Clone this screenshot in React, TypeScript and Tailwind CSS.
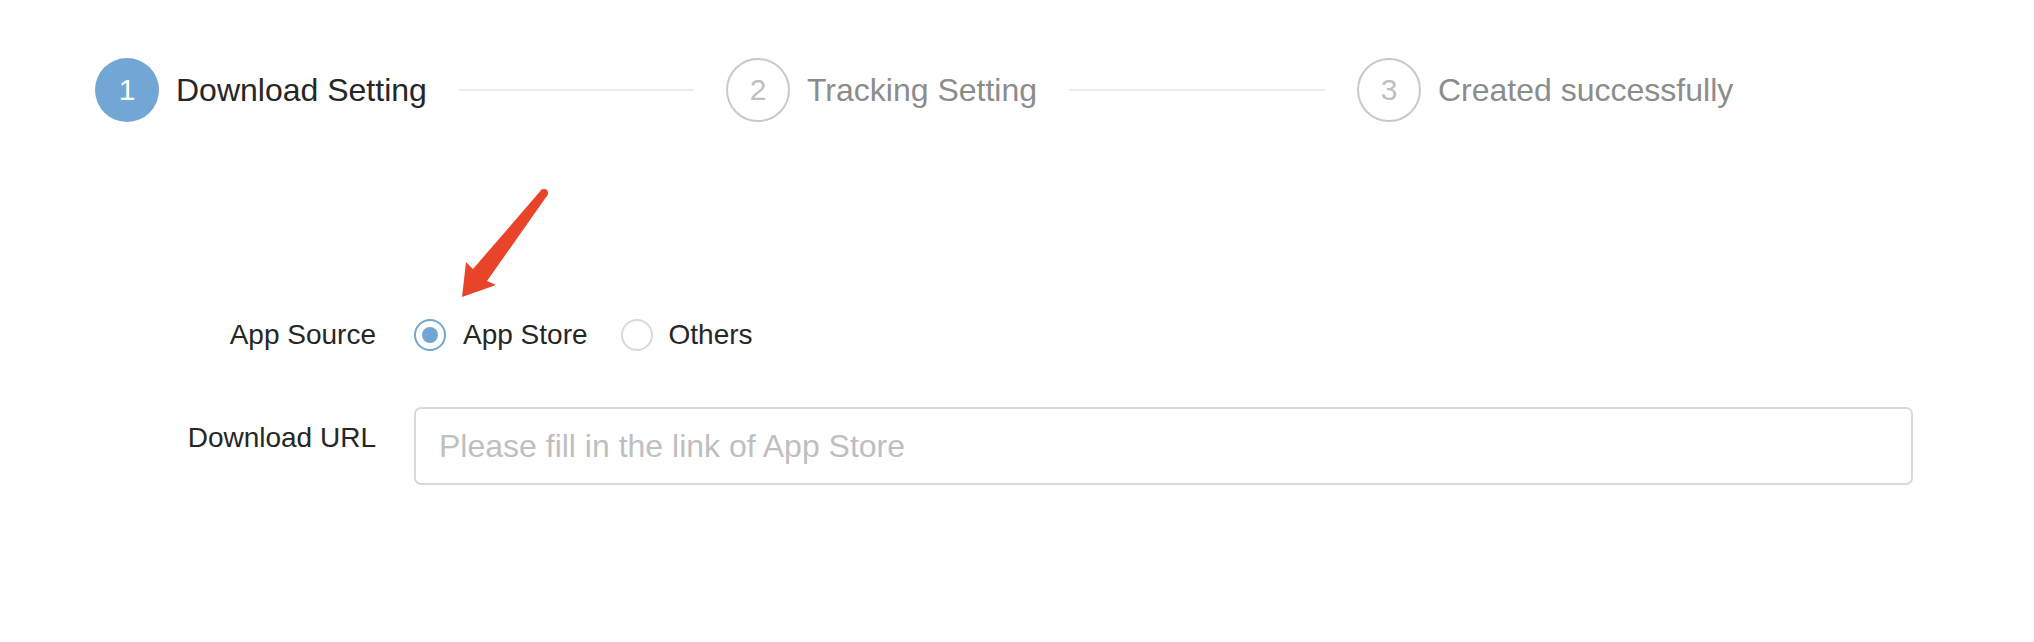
import React from 'react';

const steps = [
  { num: 1, title: "Download Setting", active: true },
  { num: 2, title: "Tracking Setting", active: false },
  { num: 3, title: "Created successfully", active: false },
];

const StepCircle: React.FC<{ num: number; active: boolean }> = ({ num, active }) =>
  active ? (
    <div className="w-[64px] h-[64px] shrink-0 rounded-full bg-[#72a6d4] flex items-center justify-center text-white text-[30px] leading-none">
      {num}
    </div>
  ) : (
    <div className="w-[64px] h-[64px] shrink-0 rounded-full border-[2px] border-[#c9c9c9] flex items-center justify-center text-[#bfbfbf] text-[30px] leading-none">
      {num}
    </div>
  );

export default function App() {
  return (
    <div
      className="relative w-[2034px] h-[642px] bg-white overflow-hidden"
      style={{ fontFamily: '"Liberation Sans", Arial, sans-serif' }}
    >
      {/* Steps */}
      <div className="ml-[95px] pt-[58px] w-[1644px] flex items-center">
        {steps.map((s, i) => {
          const last = i === steps.length - 1;
          return (
            <div key={s.num} className={last ? "w-[382px] flex-none flex items-center" : "flex-1 flex items-center"}>
              <StepCircle num={s.num} active={s.active} />
              <span
                className={`ml-[17px] text-[32px] leading-[64px] whitespace-nowrap ${
                  s.active ? "text-[#262626]" : "text-[#8c8c8c]"
                }`}
              >
                {s.title}
              </span>
              {!last && <div className="flex-1 h-[2px] bg-[#ebebeb] mx-[32px]" />}
            </div>
          );
        })}
      </div>

      {/* Form */}
      <div className="mt-[185px] flex flex-col gap-[44px]">
        <div className="flex items-center h-[56px]">
          <div className="w-[376px] text-right text-[28px] text-[#262626]">App Source</div>
          <div className="ml-[38px] flex items-center text-[28px] text-[#262626]">
            <label className="flex items-center">
              <span className="w-[32px] h-[32px] rounded-full border-[2px] border-[#72a6d4] flex items-center justify-center">
                <span className="w-[16px] h-[16px] rounded-full bg-[#72a6d4]" />
              </span>
              <span className="ml-[17px]">App Store</span>
            </label>
            <label className="flex items-center ml-[33px]">
              <span className="w-[32px] h-[32px] rounded-full border-[2px] border-[#d9d9d9]" />
              <span className="ml-[16px]">Others</span>
            </label>
          </div>
        </div>

        <div className="flex items-start">
          <div className="w-[376px] text-right text-[28px] leading-[62px] text-[#262626]">Download URL</div>
          <input
            type="text"
            placeholder="Please fill in the link of App Store"
            className="ml-[38px] w-[1499px] h-[78px] rounded-[7px] border-[2px] border-[#d9d9d9] px-[23px] text-[32px] text-[#262626] placeholder:text-[#bfbfbf] outline-none"
          />
        </div>
      </div>

      {/* Annotation arrow */}
      <svg
        className="absolute left-0 top-0 pointer-events-none"
        width="2034"
        height="642"
        viewBox="0 0 2034 642"
      >
        <polygon
          points="540.8,190.5 473,269 466,262 462,297 496,285 487,281 547.2,195.5"
          fill="#e84429"
        />
        <circle cx="544" cy="193" r="4" fill="#e84429" />
      </svg>
    </div>
  );
}
